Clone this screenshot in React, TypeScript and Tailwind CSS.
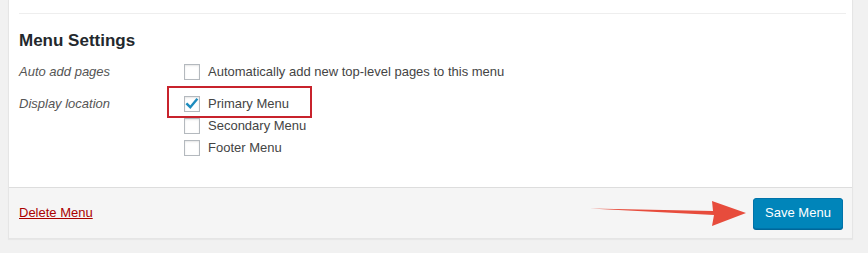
import React from "react";

function Box({ checked }: { checked?: boolean }) {
  return (
    <span className="relative inline-block h-4 w-4 shrink-0 border border-[#b4b9be] bg-white shadow-[inset_0_1px_2px_rgba(0,0,0,0.1)]">
      {checked && (
        <svg viewBox="0 0 16 16" className="absolute -left-[1px] -top-[1px] h-4 w-4">
          <path d="M3.2 8.2 L6.3 11.2 L12.6 3.6" fill="none" stroke="#1e8cbe" strokeWidth="2.4" strokeLinecap="square" />
        </svg>
      )}
    </span>
  );
}

function Option({ label, checked }: { label: string; checked?: boolean }) {
  return (
    <label className="flex h-[22px] items-center gap-2">
      <Box checked={checked} />
      <span>{label}</span>
    </label>
  );
}

export default function App() {
  return (
    <div
      className="relative h-[253px] w-[868px] overflow-hidden bg-[#f1f1f1] text-[13px] text-[#444]"
      style={{ fontFamily: '"Segoe UI", "Liberation Sans", Arial, sans-serif' }}
    >
      <div className="ml-2 w-[845px] border-x border-b border-[#e5e5e5] bg-white shadow-[0_1px_1px_rgba(0,0,0,0.04)]">
        <div className="px-[10px] pt-[13px]">
          <div className="h-0 w-[827px] border-t border-[#eee]" />
          <h3 className="mt-[18px] text-[17px] font-bold leading-[18px] text-[#23282d]">Menu Settings</h3>
          <div className="mt-[14px] flex">
            <div className="w-[165px] italic text-[#555]">
              <div className="h-[24px] leading-[16px]">Auto add pages</div>
              <div className="mt-[8px] leading-[16px]">Display location</div>
            </div>
            <div className="text-[#444]">
              <div className="-mt-[3px]">
                <Option label="Automatically add new top-level pages to this menu" />
              </div>
              <div className="mt-[10px]">
                <Option label="Primary Menu" checked />
                <Option label="Secondary Menu" />
                <Option label="Footer Menu" />
              </div>
            </div>
          </div>
        </div>
        <div className="mt-[28px] flex h-[51px] items-center justify-between border-t border-[#ddd] bg-[#f5f5f5] pl-[10px] pr-[9px]">
          <a href="#" className="text-[#a00] underline">Delete Menu</a>
          <button className="h-[31px] w-[90px] rounded-[3px] border border-[#0073aa] bg-[#0085ba] text-[13px] text-white shadow-[0_1px_0_#006799]">
            Save Menu
          </button>
        </div>
      </div>

      <div className="pointer-events-none absolute left-[167px] top-[86px] h-[32px] w-[145px] border-2 border-[#c8232c]" />

      <svg className="pointer-events-none absolute left-[588px] top-[198px]" width="160" height="30" viewBox="0 0 160 30">
        <path d="M2 10.5 L125 13 L124 3 L158 15 L124 28 L126 17 Z" fill="#e74c3c" />
      </svg>
    </div>
  );
}
